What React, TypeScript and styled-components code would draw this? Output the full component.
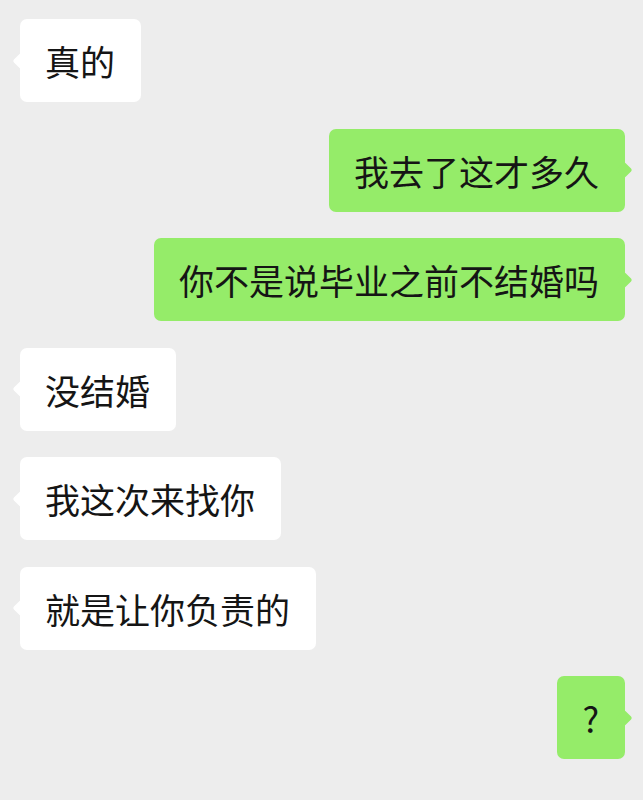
import React from "react";
import styled, { createGlobalStyle } from "styled-components";

const GlobalStyle = createGlobalStyle`
  html, body {
    margin: 0;
    padding: 0;
    background: #ededed;
  }
  body {
    font-family: "Noto Sans CJK SC", "Noto Sans", sans-serif;
  }
`;

const Chat = styled.div`
  width: 643px;
  height: 800px;
  box-sizing: border-box;
  padding: 19px 18px 0 20px;
  display: flex;
  flex-direction: column;
  gap: 26.5px;
  background: #ededed;
  overflow: hidden;
`;

const Bubble = styled.div<{ $mine?: boolean }>`
  position: relative;
  align-self: ${(p) => (p.$mine ? "flex-end" : "flex-start")};
  height: 83px;
  box-sizing: border-box;
  padding: 0 26px 0 25px;
  display: flex;
  align-items: center;
  border-radius: 7px;
  background: ${(p) => (p.$mine ? "#95ec69" : "#ffffff")};
  color: #151515;
  font-size: 35px;
  white-space: nowrap;

  &::before {
    content: "";
    position: absolute;
    top: 50%;
    ${(p) => (p.$mine ? "right: -5px;" : "left: -5px;")}
    width: 12px;
    height: 12px;
    margin-top: -6px;
    background: inherit;
    border-radius: 2px;
    transform: rotate(45deg);
  }
`;

const messages: { text: string; mine?: boolean }[] = [
  { text: "真的" },
  { text: "我去了这才多久", mine: true },
  { text: "你不是说毕业之前不结婚吗", mine: true },
  { text: "没结婚" },
  { text: "我这次来找你" },
  { text: "就是让你负责的" },
  { text: "?", mine: true },
];

export default function App() {
  return (
    <>
      <GlobalStyle />
      <Chat>
        {messages.map((m, i) => (
          <Bubble key={i} $mine={m.mine}>
            {m.text}
          </Bubble>
        ))}
      </Chat>
    </>
  );
}
